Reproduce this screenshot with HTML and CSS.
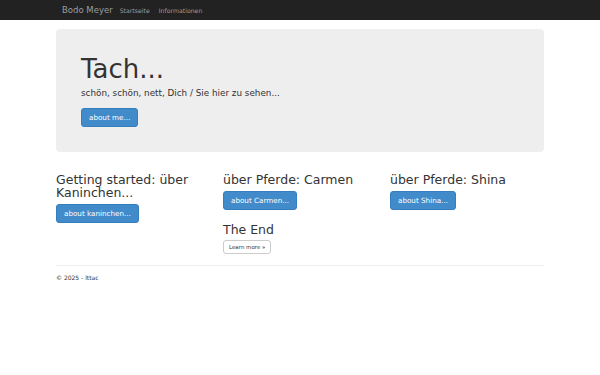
FILE: index.html
```html
<!DOCTYPE html>
<html lang="de">
<head>
  <meta charset="UTF-8">
  <meta name="viewport" content="width=device-width, initial-scale=1.0">
  <title>Bodo Meyer</title>
  <link rel="stylesheet" href="styles.css">
</head>
<body>
  <div class="navbar">
    <div class="container nav-inner">
      <a class="brand" href="#">Bodo Meyer</a>
      <a class="nav-link" href="#">Startseite</a>
      <a class="nav-link" href="#">Informationen</a>
    </div>
  </div>

  <div class="container">
    <div class="jumbotron">
      <h1>Tach...</h1>
      <p class="lead">schön, schön, nett, Dich / Sie hier zu sehen...</p>
      <a class="btn btn-primary" href="#">about me...</a>
    </div>

    <div class="row">
      <div class="col">
        <h2>Getting started: über Kaninchen...</h2>
        <a class="btn btn-primary" href="#">about kaninchen...</a>
      </div>
      <div class="col">
        <h2>über Pferde: Carmen</h2>
        <a class="btn btn-primary" href="#">about Carmen...</a>
        <h2 class="spaced">The End</h2>
        <a class="btn btn-default" href="#">Learn more &raquo;</a>
      </div>
      <div class="col">
        <h2>über Pferde: Shina</h2>
        <a class="btn btn-primary" href="#">about Shina...</a>
      </div>
    </div>

    <hr>
    <footer>
      <p>&copy; 2025 - lttac</p>
    </footer>
  </div>
</body>
</html>
```

FILE: styles.css
```css
body {
  font-family: "DejaVu Sans", Verdana, sans-serif;
  color: #333;
  background: #fff;
  margin: 0;
  padding: 0;
}

a {
  text-decoration: none;
}

.container {
  width: 488px;
  margin: 0 auto;
}

.navbar {
  background-color: #222;
  height: 20px;
}

.nav-inner {
  display: flex;
  align-items: center;
  height: 20px;
}

.brand {
  color: #9d9d9d;
  font-size: 8.5px;
  padding: 0 2px 0 6px;
}

.nav-link {
  color: #9d9d9d;
  font-size: 6.2px;
  padding: 0 4px 0 5px;
}

.jumbotron {
  display: flex;
  flex-direction: column;
  align-items: flex-start;
  margin-top: 9px;
  background-color: #eee;
  border-radius: 4px;
  padding: 26px 25px 25px;
}

.jumbotron h1 {
  font-size: 26px;
  font-weight: normal;
  margin: 0;
  line-height: 1.1;
}

.jumbotron .lead {
  font-size: 8.8px;
  line-height: 12px;
  margin: 3px 0 9px;
}

.btn {
  display: inline-block;
  font-size: 7.2px;
  line-height: 9px;
  padding: 4px 7px;
  border-radius: 3px;
  border: 1px solid transparent;
}

.btn-primary {
  background-color: #428bca;
  border-color: #357ebd;
  color: #fff;
}

.btn-default {
  background-color: #fff;
  border-color: #ccc;
  color: #333;
  font-size: 5.5px;
  line-height: 8px;
  padding: 2px 5px;
}

.row {
  display: grid;
  grid-template-columns: repeat(3, 1fr);
  column-gap: 13px;
  margin-top: 21px;
}

.col {
  display: flex;
  flex-direction: column;
  align-items: flex-start;
}

.col h2 {
  font-size: 12.5px;
  font-weight: normal;
  line-height: 13px;
  margin: 0 0 5px;
}

.col h2.spaced {
  margin: 13px 0 4px;
}

hr {
  border: 0;
  border-top: 1px solid #eee;
  margin: 11px 0 8px;
}

footer p {
  font-size: 6px;
  margin: 0;
}
```
